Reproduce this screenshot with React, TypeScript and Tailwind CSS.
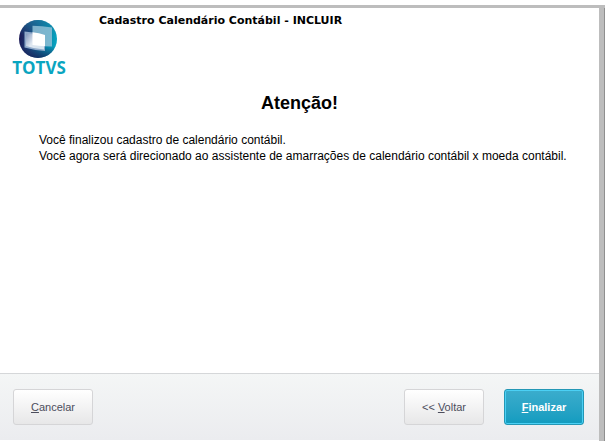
import type { ReactNode } from "react";

interface WizardButtonProps {
  children: ReactNode;
  primary?: boolean;
}

function WizardButton({ children, primary = false }: WizardButtonProps) {
  return (
    <button
      type="button"
      className={`h-9 w-20 rounded-[3px] border text-[11px] leading-4 ${
        primary
          ? "border-[#2497b5] bg-linear-to-b from-[#3badcd] to-[#109cbf] font-bold text-white inset-ring inset-ring-[#4bd0f5]"
          : "border-[#d5d5d7] bg-linear-to-b from-white to-[#e7e7e8] text-[#4c4d5c]"
      }`}
    >
      {children}
    </button>
  );
}

function Logo() {
  return (
    <div className="flex w-[54px] flex-col items-center">
      <svg width="40" height="40" viewBox="0 0 40 40" aria-hidden="true">
        <defs>
          <linearGradient id="globe" x1="0" y1="0.4" x2="1" y2="0.5">
            <stop offset="0" stopColor="#1d1955" />
            <stop offset="0.35" stopColor="#1b4a80" />
            <stop offset="0.7" stopColor="#087fa5" />
            <stop offset="1" stopColor="#08a5c1" />
          </linearGradient>
          <linearGradient id="shade" x1="0.5" y1="0" x2="0.5" y2="1">
            <stop offset="0" stopColor="#1b83a6" stopOpacity="0.6" />
            <stop offset="0.4" stopColor="#1b83a6" stopOpacity="0" />
            <stop offset="0.7" stopColor="#16164e" stopOpacity="0" />
            <stop offset="1" stopColor="#16164e" stopOpacity="0.7" />
          </linearGradient>
          <linearGradient id="screen" x1="0" y1="0" x2="1" y2="0.6">
            <stop offset="0" stopColor="#8296bb" />
            <stop offset="0.5" stopColor="#dfe7f1" />
            <stop offset="1" stopColor="#d5e3ef" />
          </linearGradient>
        </defs>
        <circle cx="19" cy="20" r="19" fill="url(#globe)" />
        <circle cx="19" cy="20" r="19" fill="url(#shade)" />
        <path d="M13.5 6.8Q23 7 33 8.5V27.5Q24 27.5 13.5 26Z" fill="#8fc0d6" fillOpacity="0.85" />
        <path d="M5.5 12.5Q16 13 26 16V32Q16 31.5 5.5 28.5Z" fill="#8fa9ca" />
        <path d="M7 14.5Q16 15 25 17.5V30.5Q16 30 7 27Z" fill="url(#screen)" />
        <path d="M13.5 13.2Q20 13.8 26 16V27.3Q20 27 13.5 26Z" fill="#ffffff" />
      </svg>
      <span className="font-['Open_Sans',sans-serif] text-[17px] leading-[18px] font-bold text-[#0aa5c0]">
        TOTVS
      </span>
    </div>
  );
}

function App() {
  return (
    <div className="flex min-h-screen flex-col bg-white pt-[5px] font-['Liberation_Sans',Arial,sans-serif] text-black">
      <div className="flex flex-1 flex-col border-t-[3px] border-[#bdbdbd]">
        <div className="flex flex-1">
          <div className="flex min-w-0 flex-1 flex-col pb-px">
            <header className="flex gap-[33px] px-3 pt-[11px]">
              <Logo />
              <h1 className="-mt-1.5 font-['DejaVu_Sans',Verdana,sans-serif] text-[11px] leading-4 font-bold">
                Cadastro Calendário Contábil - INCLUIR
              </h1>
            </header>

            <main className="flex-1 pt-3.5">
              <h2 className="text-center text-lg leading-6 font-bold">Atenção!</h2>
              <p className="mt-[17px] pl-[39px] text-xs leading-4">
                Você finalizou cadastro de calendário contábil.
                <br />
                Você agora será direcionado ao assistente de amarrações de calendário contábil x moeda contábil.
              </p>
            </main>

            <footer className="flex items-start justify-between border-t border-[#d5d7d9] bg-linear-to-b from-[#f4f6f6] to-[#ebecef] pt-[15px] pr-[15px] pb-[15px] pl-[13px]">
              <WizardButton>
                <u>C</u>ancelar
              </WizardButton>
              <div className="flex gap-5">
                <WizardButton>
                  &lt;&lt; <u>V</u>oltar
                </WizardButton>
                <WizardButton primary>
                  <u>F</u>inalizar
                </WizardButton>
              </div>
            </footer>
          </div>
          <div className="w-1.5 border-r border-[#8f8f8f] bg-[#bdbdbd]" />
        </div>
      </div>
    </div>
  );
}

export default App;
